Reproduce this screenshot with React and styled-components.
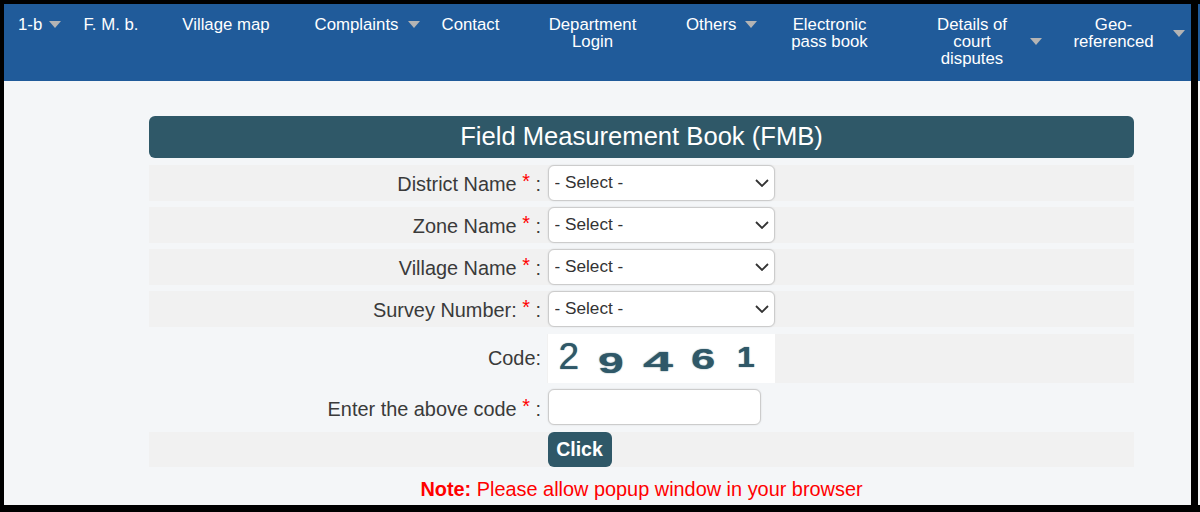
import React from "react";
import styled, { createGlobalStyle } from "styled-components";

const GlobalStyle = createGlobalStyle`
  html, body {
    margin: 0;
    padding: 0;
    background: #000;
  }
  body {
    font-family: "Liberation Sans", Arial, sans-serif;
  }
`;

const navItems = [
  { lines: ["1-b"], w: 23, ml: 0, caret: 8 },
  { lines: ["F. M. b."], w: 56, ml: 22 },
  { lines: ["Village map"], w: 88, ml: 43 },
  { lines: ["Complaints"], w: 85, ml: 44, caret: 9 },
  { lines: ["Contact"], w: 59, ml: 21 },
  { lines: ["Department", "Login"], w: 89, ml: 48 },
  { lines: ["Others"], w: 50, ml: 49, caret: 9 },
  { lines: ["Electronic", "pass book"], w: 77, ml: 34 },
  { lines: ["Details of", "court", "disputes"], w: 72, ml: 68, caret: 22 },
  { lines: ["Geo-", "referenced"], w: 81, ml: 31, caret: 19 },
];

const selectRows = ["District Name", "Zone Name", "Village Name", "Survey Number:"];

const digits = [
  { ch: "2", size: 37, sx: 1, dy: -2, w: 39, weight: 400 },
  { ch: "9", size: 29, sx: 1.6, dy: 5, w: 45, weight: 700 },
  { ch: "4", size: 27, sx: 2, dy: 4, w: 48, weight: 700 },
  { ch: "6", size: 30, sx: 1.45, dy: 0, w: 46, weight: 700 },
  { ch: "1", size: 29, sx: 1.1, dy: -1, w: 20, weight: 700 },
];

const chevron =
  "data:image/svg+xml,%3Csvg xmlns='http://www.w3.org/2000/svg' width='14' height='8' viewBox='0 0 14 8'%3E%3Cpath d='M1 1l6 6 6-6' fill='none' stroke='%23333' stroke-width='1.8'/%3E%3C/svg%3E";

const App = () => (
  <Screen>
    <GlobalStyle />
    <Frame>
      <Nav>
        {navItems.map((item) => (
          <NavItem key={item.lines[0]} $ml={item.ml}>
            <NavText $w={item.w}>
              {item.lines.map((line) => (
                <div key={line}>{line}</div>
              ))}
            </NavText>
            {item.caret && <Caret $ml={item.caret} />}
          </NavItem>
        ))}
      </Nav>
      <Main>
        <Heading>Field Measurement Book (FMB)</Heading>
        <Rows>
          {selectRows.map((label) => (
            <Row key={label} $shaded>
              <Label>
                {label} <Star>*</Star> :
              </Label>
              <Field>
                <SelectBox defaultValue="">
                  <option value="">- Select -</option>
                </SelectBox>
              </Field>
            </Row>
          ))}
          <CodeRow>
            <CodeLabel>Code:</CodeLabel>
            <Field>
              <Captcha>
                {digits.map((d) => (
                  <Digit
                    key={d.ch}
                    $size={d.size}
                    $sx={d.sx}
                    $dy={d.dy}
                    $w={d.w}
                    $weight={d.weight}
                  >
                    {d.ch}
                  </Digit>
                ))}
              </Captcha>
            </Field>
          </CodeRow>
          <InputRow>
            <Label>
              Enter the above code <Star>*</Star> :
            </Label>
            <Field>
              <CodeInput type="text" />
            </Field>
          </InputRow>
          <ButtonRow $shaded>
            <span />
            <Field>
              <SubmitButton>Click</SubmitButton>
            </Field>
          </ButtonRow>
        </Rows>
        <Note>
          <b>Note:</b> Please allow popup window in your browser
        </Note>
      </Main>
    </Frame>
  </Screen>
);

export default App;

const Screen = styled.div`
  width: 1200px;
  height: 512px;
  box-sizing: border-box;
  padding: 4px 9px 7px 4px;
  background:
    linear-gradient(#000 4px, #205b9a 4px, #205b9a 81px, #f4f6f8 81px, #f4f6f8 505px, #000 505px)
      right / 2px 100% no-repeat,
    #000;
  overflow: hidden;
`;

const Frame = styled.div`
  height: 501px;
  background: #f4f6f8;
  overflow: hidden;
`;

const Nav = styled.nav`
  display: flex;
  align-items: flex-start;
  height: 77px;
  box-sizing: border-box;
  padding: 12px 0 0 14px;
  background: #205b9a;
  color: #fff;
  font-size: 16.8px;
  line-height: 17px;
`;

const NavItem = styled.div`
  display: flex;
  align-items: center;
  flex-shrink: 0;
  margin-left: ${(p) => p.$ml}px;
`;

const NavText = styled.div`
  width: ${(p) => p.$w}px;
  text-align: center;
  white-space: nowrap;
`;

const Caret = styled.span`
  width: 0;
  height: 0;
  margin-left: ${(p) => p.$ml}px;
  border-left: 6.5px solid transparent;
  border-right: 6.5px solid transparent;
  border-top: 7.5px solid #b4b4b4;
`;

const Main = styled.main`
  padding: 35px 57px 0 145px;
`;

const Heading = styled.h1`
  margin: 0 0 7px;
  height: 42px;
  border-radius: 6px;
  background: #2f5868;
  color: #fff;
  font-size: 25.6px;
  font-weight: 400;
  line-height: 41px;
  text-align: center;
`;

const Rows = styled.div`
  display: flex;
  flex-direction: column;
  gap: 6px;
`;

const Row = styled.div`
  display: grid;
  grid-template-columns: 392px 1fr;
  column-gap: 6.5px;
  align-items: center;
  min-height: 36px;
  background: ${(p) => (p.$shaded ? "#f1f1f1" : "transparent")};
`;

const CodeRow = styled(Row)`
  height: 49px;
  margin-top: 1px;
  background: linear-gradient(to right, #f4f6f8 398px, #f1f1f1 398px);
`;

const InputRow = styled(Row)`
  min-height: 37px;
`;

const ButtonRow = styled(Row)`
  min-height: 35px;
`;

const Label = styled.div`
  padding-top: 3px;
  color: #3a3a3a;
  font-size: 19.9px;
  text-align: right;
  white-space: nowrap;
`;

const CodeLabel = styled(Label)`
  padding-top: 0;
`;

const Star = styled.span`
  position: relative;
  top: -3px;
  color: #f00;
`;

const Field = styled.div`
  display: flex;
  align-items: center;
`;

const SelectBox = styled.select`
  width: 227px;
  height: 36px;
  box-sizing: border-box;
  padding: 0 0 3px 6px;
  border: 1px solid #ccc;
  border-radius: 6px;
  background: #fff url("${chevron}") no-repeat right 5px center;
  box-shadow: 0 0 2px rgba(0, 0, 0, 0.12);
  appearance: none;
  color: #333;
  font-family: "Liberation Sans", Arial, sans-serif;
  font-size: 17.2px;
`;

const Captcha = styled.div`
  display: flex;
  align-items: center;
  width: 227px;
  height: 49px;
  box-sizing: border-box;
  padding-left: 11px;
  background: #fff;
`;

const Digit = styled.span`
  display: inline-block;
  flex-shrink: 0;
  width: ${(p) => p.$w}px;
  color: #2f5868;
  font-size: ${(p) => p.$size}px;
  font-weight: ${(p) => p.$weight};
  line-height: 1;
  text-shadow: 0 0 1px #2f5868;
  transform: translateY(${(p) => p.$dy}px) scaleX(${(p) => p.$sx});
  transform-origin: left center;
`;

const CodeInput = styled.input`
  width: 213px;
  height: 36px;
  margin-bottom: 1px;
  box-sizing: border-box;
  border: 1px solid #ccc;
  border-radius: 6px;
  background: #fff;
  box-shadow: 0 0 2px rgba(0, 0, 0, 0.12);
`;

const SubmitButton = styled.button`
  width: 64px;
  height: 35px;
  padding: 0;
  border: 0;
  border-radius: 6px;
  background: #2f5868;
  color: #fff;
  font-family: "Liberation Sans", Arial, sans-serif;
  font-size: 19.5px;
  font-weight: 700;
`;

const Note = styled.p`
  margin: 11px 0 0;
  color: #f00;
  font-size: 19.9px;
  text-align: center;
`;
